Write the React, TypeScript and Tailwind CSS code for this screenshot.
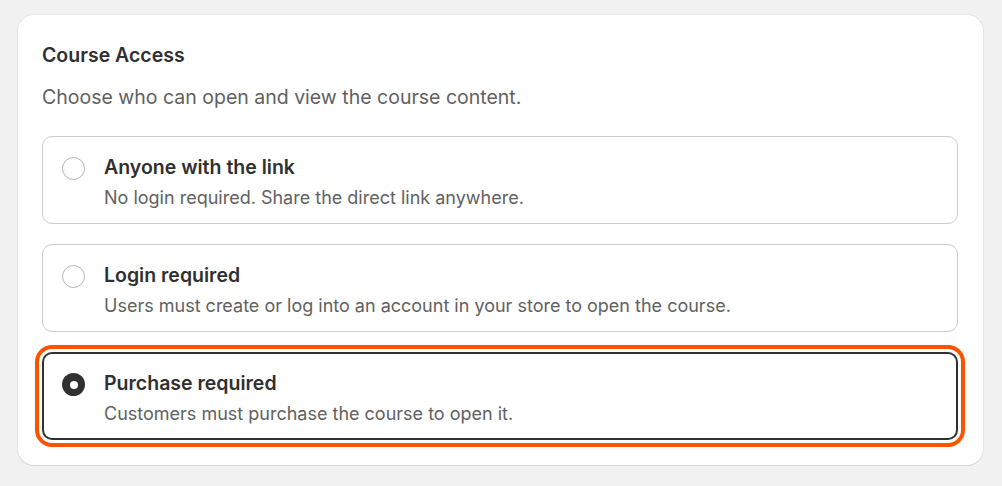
import { useState } from 'react';

const options = [
  {
    id: 'anyone',
    title: 'Anyone with the link',
    description: 'No login required. Share the direct link anywhere.',
  },
  {
    id: 'login',
    title: 'Login required',
    description: 'Users must create or log into an account in your store to open the course.',
  },
  {
    id: 'purchase',
    title: 'Purchase required',
    description: 'Customers must purchase the course to open it.',
  },
];

function Radio({ checked }: { checked: boolean }) {
  if (checked) {
    return (
      <span className="flex h-[23px] w-[23px] shrink-0 items-center justify-center rounded-full bg-[#303030]">
        <span className="block h-[8px] w-[8px] rounded-full bg-white" />
      </span>
    );
  }
  return <span className="block h-[23px] w-[23px] shrink-0 rounded-full border-[1.5px] border-[#b5b5b5] bg-white" />;
}

export default function App() {
  const [selected, setSelected] = useState('purchase');

  return (
    <div className="min-h-[486px] bg-[#f1f1f1] pt-[15px] pr-[19px] pl-[18px] font-['Inter',sans-serif]">
      <div className="rounded-[16px] bg-white pt-[26px] pr-[25px] pb-[25px] pl-[24px] shadow-[0_1px_0_0_#d4d4d4,0_0_0_1px_#e6e6e6]">
        <h2 className="text-[19.5px] leading-[28px] font-semibold text-[#303030]">Course Access</h2>
        <p className="mt-[14px] text-[19.5px] leading-[28px] text-[#616161]">
          Choose who can open and view the course content.
        </p>

        <div className="mt-[25px] flex flex-col gap-[20px]">
          {options.map((opt) => {
            const isActive = opt.id === selected;
            return (
              <button
                key={opt.id}
                type="button"
                onClick={() => setSelected(opt.id)}
                className={`flex h-[88px] items-start gap-[19px] rounded-[10px] bg-white text-left ${
                  isActive
                    ? 'border-2 border-[#303030] px-[18px] pt-[15px] outline-4 outline-offset-[3px] outline-[#ff5200]'
                    : 'border border-[#cccccc] px-[19px] pt-[16px]'
                }`}
              >
                <div className="pt-[4px]">
                  <Radio checked={isActive} />
                </div>
                <div className="flex flex-col">
                  <span className="text-[19.5px] leading-[28px] font-semibold text-[#303030]">{opt.title}</span>
                  <span className="mt-[5px] text-[18px] leading-[24px] text-[#616161]">{opt.description}</span>
                </div>
              </button>
            );
          })}
        </div>
      </div>
    </div>
  );
}
